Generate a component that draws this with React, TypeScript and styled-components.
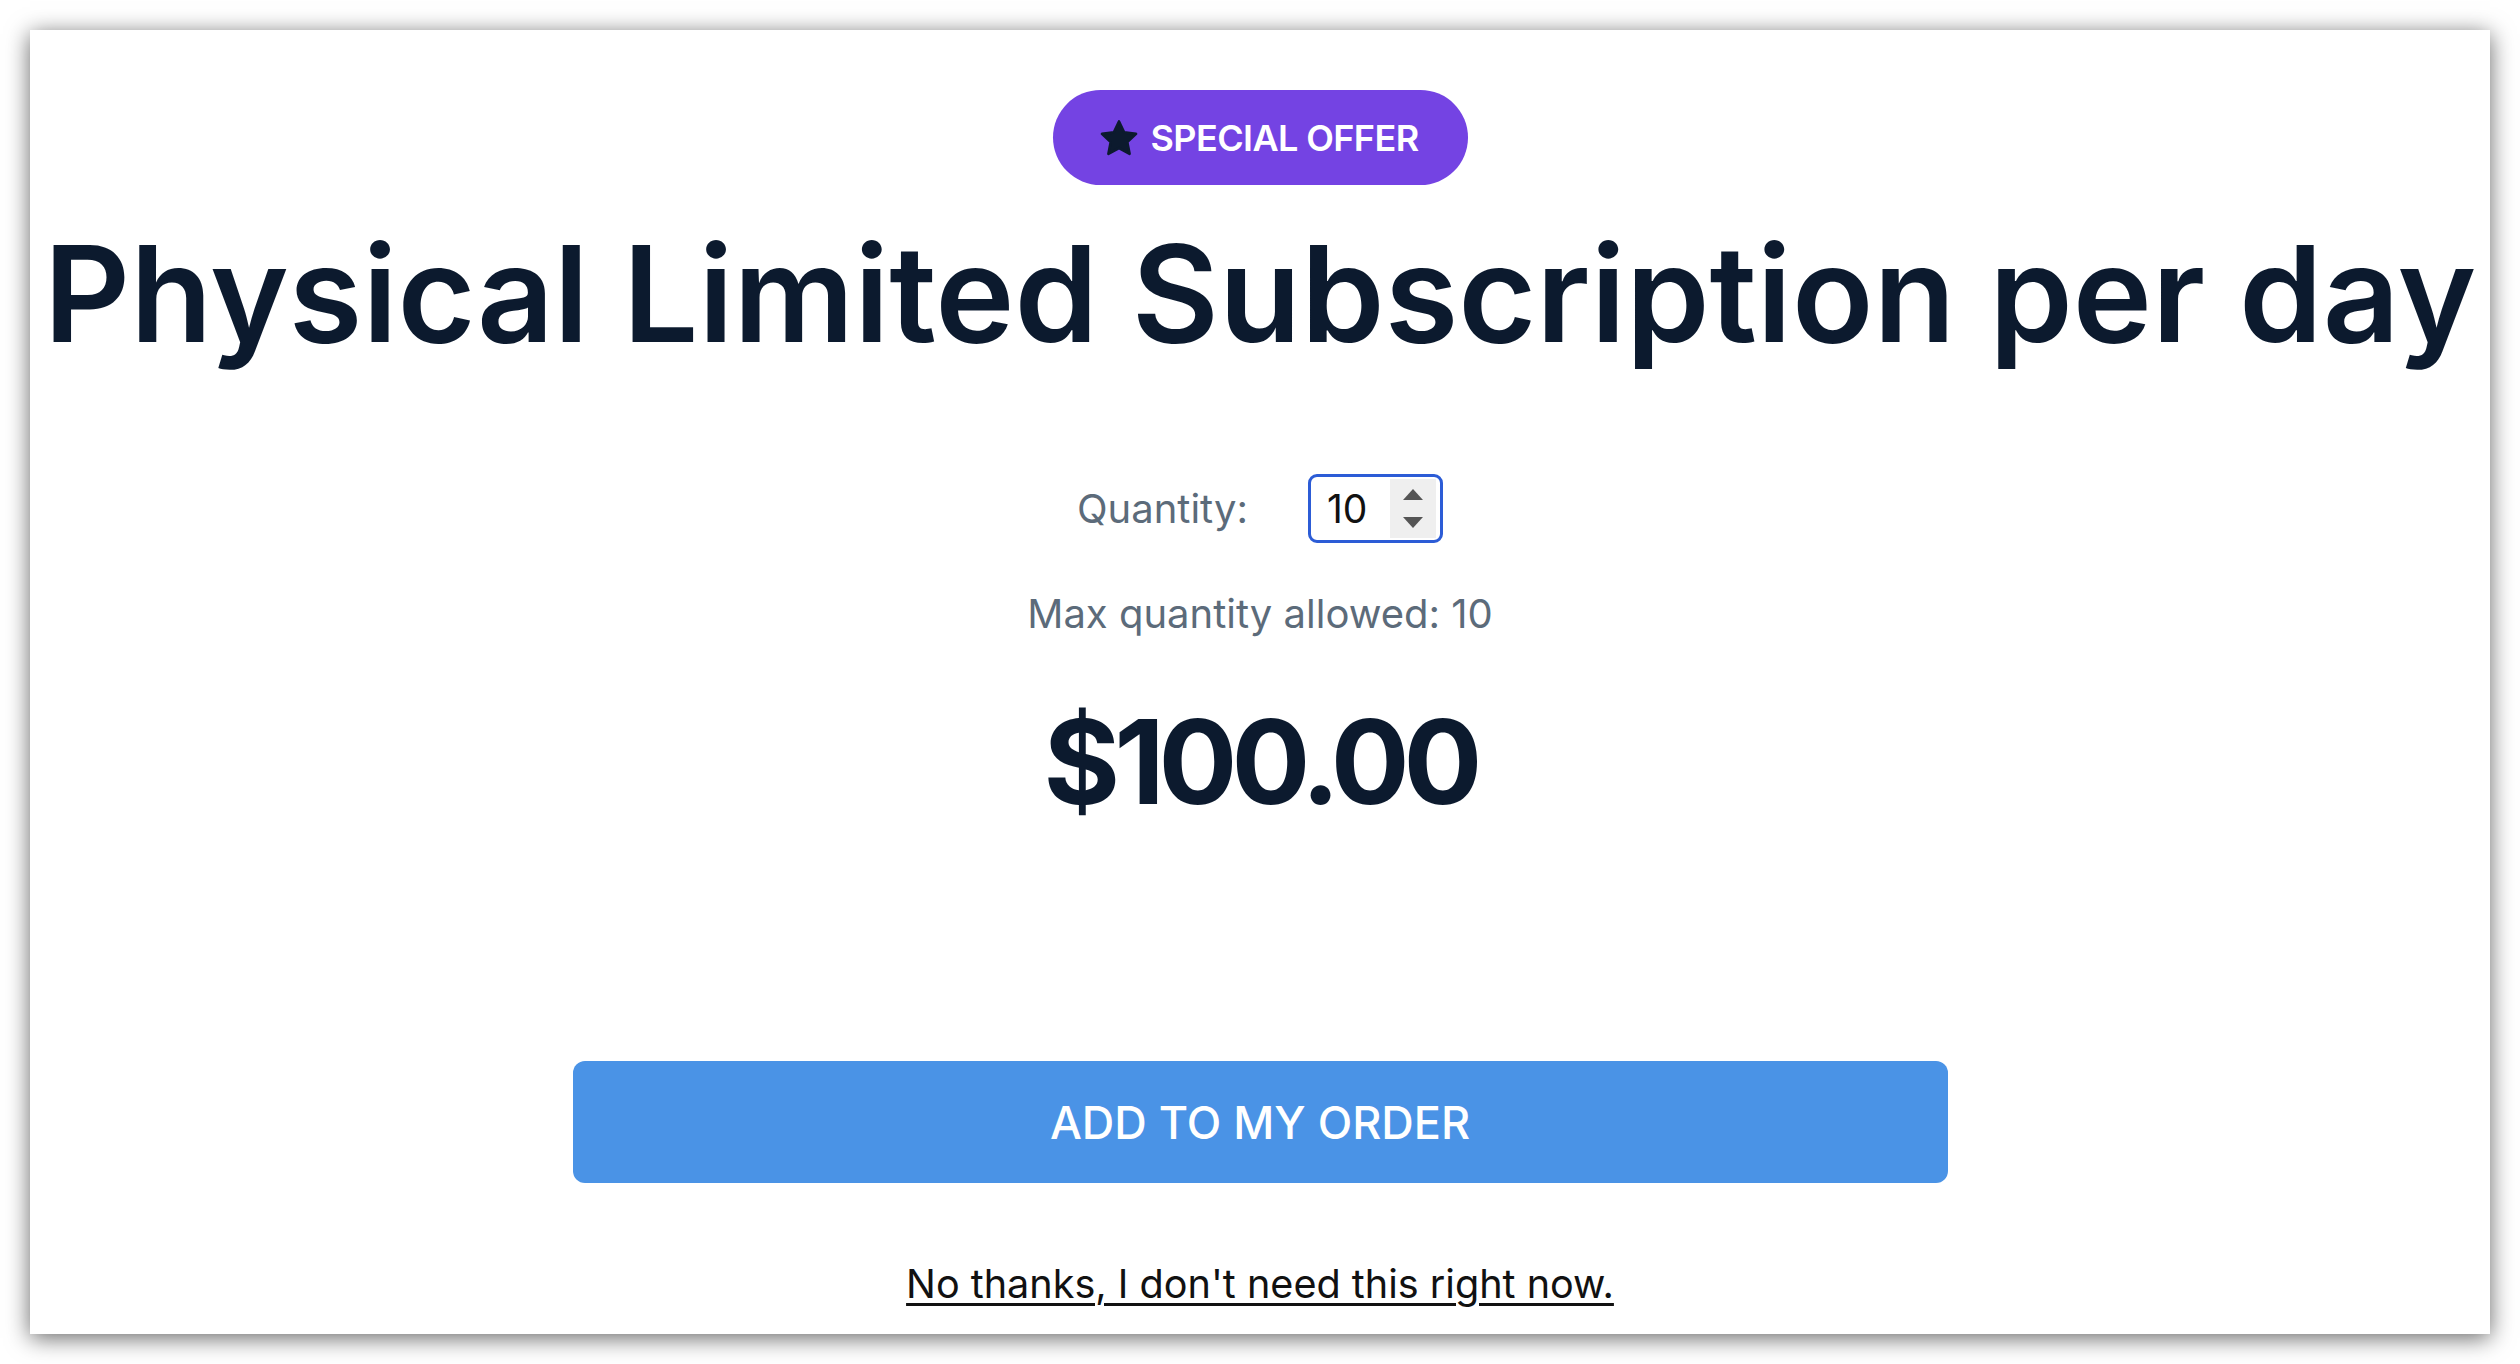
import styled, { createGlobalStyle } from 'styled-components';

const GlobalStyle = createGlobalStyle`
  html, body {
    margin: 0;
    padding: 0;
    background: #ffffff;
  }
  body {
    font-family: 'Inter', 'Liberation Sans', sans-serif;
  }
`;

const Page = styled.div`
  padding: 30px;
  box-sizing: border-box;
  width: 2520px;
  height: 1364px;
`;

const Panel = styled.main`
  background: #ffffff;
  height: 1304px;
  box-shadow: 0 4px 22px rgba(0, 0, 0, 0.6);
  display: flex;
  flex-direction: column;
  align-items: center;
  padding-top: 60px;
  box-sizing: border-box;
  overflow: hidden;
`;

const Badge = styled.div`
  display: flex;
  align-items: center;
  gap: 12px;
  height: 95px;
  width: 415px;
  box-sizing: border-box;
  padding: 0 0 0 46px;
  border-radius: 48px;
  background: #7443e3;
  color: #ffffff;
  font-size: 36px;
  font-weight: 600;
  letter-spacing: -0.6px;
`;

const Title = styled.h1`
  margin: 40px 0 0;
  font-size: 134px;
  line-height: 136px;
  font-weight: 600;
  letter-spacing: 0;
  color: #0c1a2e;
  white-space: nowrap;
`;

const QuantityRow = styled.div`
  margin-top: 113px;
  display: flex;
  align-items: center;
  gap: 60px;
`;

const Label = styled.span`
  font-size: 40px;
  color: #5c6b7a;
`;

const NumberBox = styled.div`
  width: 135px;
  height: 69px;
  box-sizing: border-box;
  border: 3px solid #2c5cd6;
  border-radius: 9px;
  display: flex;
  align-items: stretch;
  overflow: hidden;
`;

const NumberValue = styled.span`
  flex: 1;
  display: flex;
  align-items: center;
  padding-left: 16px;
  font-size: 39px;
  color: #111111;
`;

const Spinner = styled.div`
  width: 46px;
  margin: 2px 4px 2px 0;
  background: #efefef;
  display: flex;
  flex-direction: column;
  align-items: center;
  justify-content: center;
  gap: 17px;
`;

const Arrow = styled.span<{ $down?: boolean }>`
  width: 0;
  height: 0;
  border-left: 10px solid transparent;
  border-right: 10px solid transparent;
  ${(p) =>
    p.$down
      ? 'border-top: 11px solid #555555;'
      : 'border-bottom: 11px solid #555555;'}
`;

const MaxNote = styled.p`
  margin: 47px 0 0;
  font-size: 40px;
  line-height: 48px;
  color: #5c6b7a;
`;

const Price = styled.div`
  margin-top: 65px;
  font-size: 117px;
  line-height: 117px;
  font-weight: 700;
  letter-spacing: -6px;
  color: #0c1a2e;
`;

const AddButton = styled.button`
  margin-top: 241px;
  width: 1375px;
  height: 122px;
  border: none;
  border-radius: 12px;
  background: #4a93e6;
  color: #ffffff;
  font-family: 'Inter', 'Liberation Sans', sans-serif;
  font-size: 45px;
  font-weight: 500;
  cursor: pointer;
`;

const DeclineLink = styled.a`
  margin-top: 77px;
  font-size: 39.6px;
  line-height: 48px;
  color: #111111;
  text-decoration: underline;
  text-decoration-thickness: 3px;
  text-underline-offset: 5px;
  cursor: pointer;
`;

function StarIcon() {
  return (
    <svg width="40" height="38" viewBox="0 0 24 23">
      <path
        d="M12 1.5l3.1 6.6 7.2.9-5.3 5 1.4 7.1L12 17.6l-6.4 3.5L7 14l-5.3-5 7.2-.9z"
        fill="#0c1a2e"
        stroke="#0c1a2e"
        strokeWidth="1.6"
        strokeLinejoin="round"
      />
    </svg>
  );
}

export default function App() {
  return (
    <>
      <GlobalStyle />
      <Page>
        <Panel>
          <Badge>
            <StarIcon />
            SPECIAL OFFER
          </Badge>
          <Title>Physical Limited Subscription per day</Title>
          <QuantityRow>
            <Label>Quantity:</Label>
            <NumberBox>
              <NumberValue>10</NumberValue>
              <Spinner>
                <Arrow />
                <Arrow $down />
              </Spinner>
            </NumberBox>
          </QuantityRow>
          <MaxNote>Max quantity allowed: 10</MaxNote>
          <Price>$100.00</Price>
          <AddButton>ADD TO MY ORDER</AddButton>
          <DeclineLink>No thanks, I don't need this right now.</DeclineLink>
        </Panel>
      </Page>
    </>
  );
}
